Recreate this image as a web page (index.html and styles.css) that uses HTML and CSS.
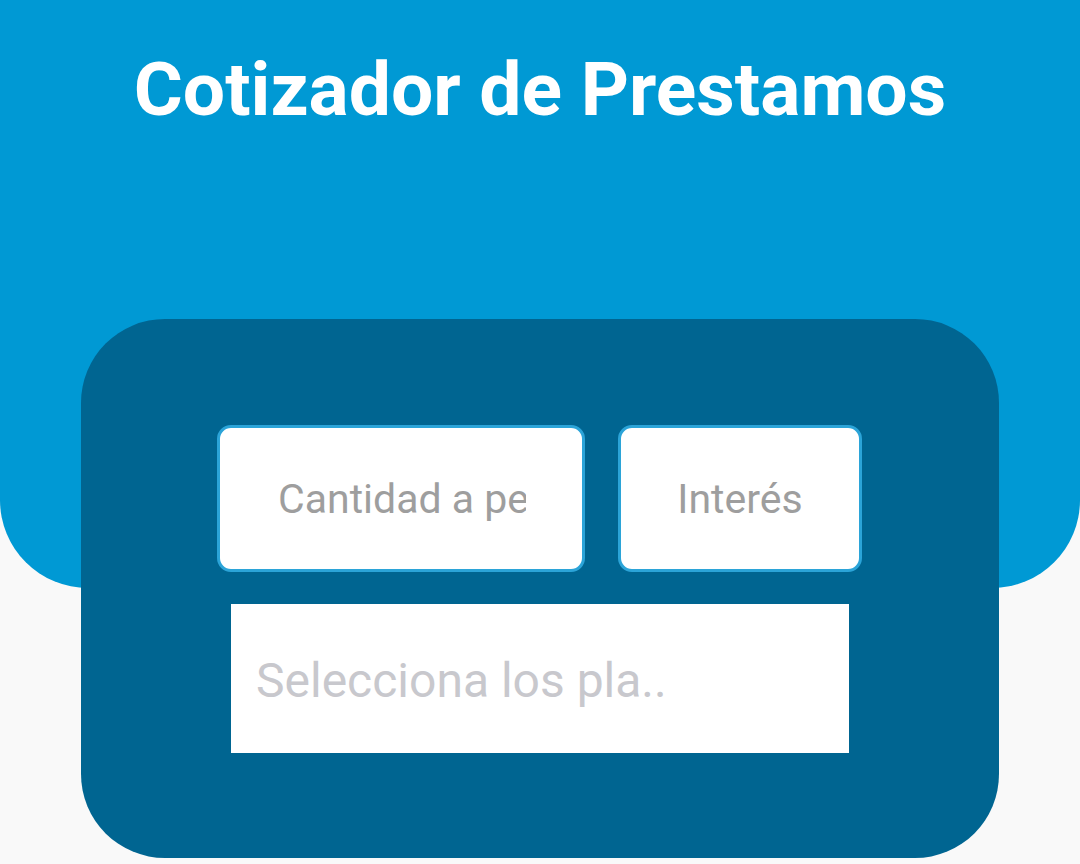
FILE: index.html
```html
<!DOCTYPE html>
<html lang="es">
<head>
<meta charset="utf-8">
<title>Cotizador de Prestamos</title>
<link rel="stylesheet" href="styles.css">
</head>
<body>
<header class="header">
  <h1 class="title">Cotizador de Prestamos</h1>
</header>
<main class="card">
  <div class="row">
    <input class="field field-amount" type="text" placeholder="Cantidad a pedir">
    <input class="field field-rate" type="text" placeholder="Interés">
  </div>
  <div class="picker">Selecciona los pla..</div>
</main>
</body>
</html>
```

FILE: styles.css
```css
html, body {
  margin: 0;
  padding: 0;
}
body {
  background: #f9f9f9;
  font-family: Roboto, "Liberation Sans", sans-serif;
  width: 1080px;
  height: 864px;
  overflow: hidden;
}
.header {
  background: #0099d4;
  height: 588px;
  border-radius: 0 0 88px 88px;
  display: flex;
  justify-content: center;
  box-sizing: border-box;
  padding-top: 46px;
}
.title {
  margin: 0;
  color: #ffffff;
  font-weight: 700;
  font-size: 75px;
  line-height: 86px;
  height: 86px;
}
.card {
  width: 918px;
  height: 539px;
  margin: -269px auto 0;
  background: #006591;
  border-radius: 84px;
  box-sizing: border-box;
  padding-top: 106px;
  display: flex;
  flex-direction: column;
  align-items: center;
  gap: 32px;
}
.row {
  display: flex;
  gap: 33px;
  margin-left: -1px;
}
.field {
  height: 147px;
  box-sizing: border-box;
  background: #ffffff;
  border: 3px solid #2ba4d8;
  border-radius: 14px;
  font-family: Roboto, "Liberation Sans", sans-serif;
  font-size: 41px;
  color: #333;
  text-align: center;
  outline: none;
  padding: 0 56px;
}
.field::placeholder {
  color: #9e9e9e;
  opacity: 1;
}
.field-amount {
  width: 368px;
  text-align: left;
  padding-left: 58px;
}
.field-rate {
  width: 244px;
  padding: 0 10px;
}
.picker {
  width: 618px;
  height: 149px;
  background: #ffffff;
  box-sizing: border-box;
  padding-left: 25px;
  display: flex;
  align-items: center;
  font-size: 48px;
  color: #c8c8cd;
  padding-top: 4px;
}
```
